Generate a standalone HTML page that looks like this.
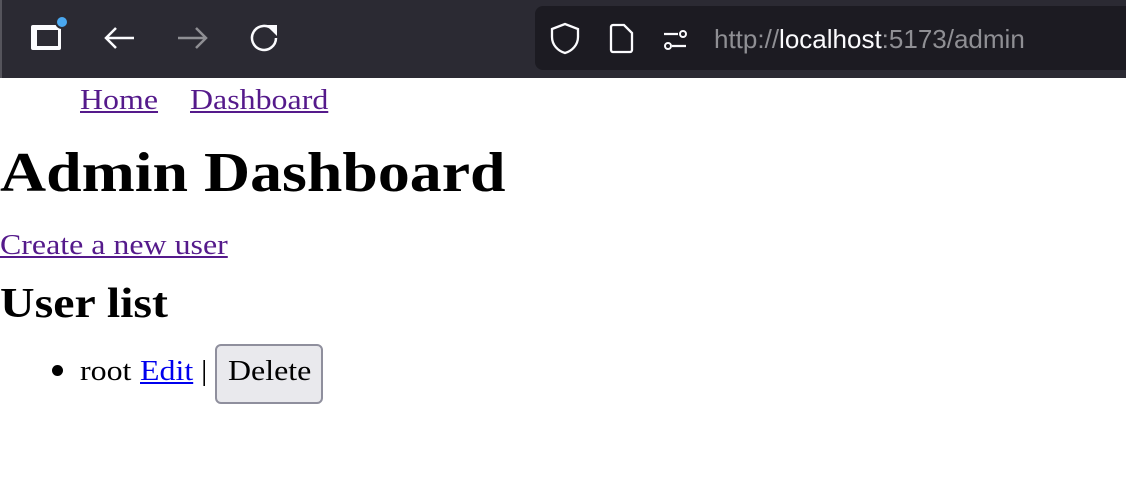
<!DOCTYPE html>
<html><head><style>
body{margin:0;width:1126px;height:490px;overflow:hidden;background:#fff;font-family:"Liberation Serif",serif;position:relative}
.bar{position:absolute;left:0;top:0;width:1126px;height:78px;background:#2b2a33;border-left:2px solid #55545c;box-sizing:border-box}
.url{position:absolute;left:535px;top:6px;width:600px;height:64px;background:#1c1b22;border-radius:8px}
.t{position:absolute;white-space:nowrap;line-height:1;transform:scaleX(1.14);transform-origin:0 0}
a.v{color:#551a8b}
a.b{color:#0000ee}
</style></head><body>
<div class="bar">
<svg width="530" height="78" style="position:absolute;left:-2px;top:0">
<rect x="31" y="25" width="30" height="25" rx="2" fill="#fbfbfe"/>
<rect x="37" y="30" width="21" height="16" fill="#2b2a33"/>
<circle cx="62" cy="22" r="6" fill="#4aa8f0" stroke="#2b2a33" stroke-width="2"/>
<path d="M106 38h28M116 28l-10 10 10 10" stroke="#fbfbfe" stroke-width="2.5" fill="none"/>
<path d="M178 38h28M196 28l10 10-10 10" stroke="#8f8f94" stroke-width="2.5" fill="none"/>
<path d="M273 30a12 12 0 1 0 3 8" stroke="#fbfbfe" stroke-width="2.5" fill="none"/>
<path d="M266 25h11v11z" fill="#fbfbfe"/>
</svg>
</div>
<div class="url">
<svg width="170" height="64" style="position:absolute;left:0;top:0">
<path d="M17 23l13-5 13 5v8c0 8-6 14-13 16c-7-2-13-8-13-16z" stroke="#fbfbfe" stroke-width="2.3" fill="none"/>
<path d="M78 19h11l8 8v17a2 2 0 0 1-2 2h-17a2 2 0 0 1-2-2v-23a2 2 0 0 1 2-2z" stroke="#fbfbfe" stroke-width="2.3" fill="none"/>
<path d="M129 28h14M137 40h14" stroke="#fbfbfe" stroke-width="2.3"/>
<circle cx="148" cy="28" r="3" stroke="#fbfbfe" stroke-width="2" fill="none"/>
<circle cx="133" cy="40" r="3" stroke="#fbfbfe" stroke-width="2" fill="none"/>
</svg>
<div class="t" style="left:179px;top:20px;font-family:'Liberation Sans',sans-serif;font-size:26px;color:#8f8f94;transform:none">http://<span style="color:#fbfbfe">localhost</span>:5173/admin</div>
</div>
<div class="t" style="left:80px;top:86.5px;font-size:28px"><a class="v" href="#">Home</a></div>
<div class="t" style="left:190px;top:86.5px;font-size:28px"><a class="v" href="#">Dashboard</a></div>
<div class="t" style="left:0;top:145px;font-size:56px;font-weight:bold">Admin Dashboard</div>
<div class="t" style="left:0;top:231.5px;font-size:28px"><a class="v" href="#">Create a new user</a></div>
<div class="t" style="left:0;top:283px;font-size:42px;font-weight:bold">User list</div>
<div style="position:absolute;left:52px;top:365px;width:11px;height:11px;border-radius:50%;background:#000"></div>
<div class="t" style="left:80px;top:357.5px;font-size:28px">root</div>
<div class="t" style="left:140px;top:357.5px;font-size:28px"><a class="b" href="#">Edit</a></div>
<div class="t" style="left:201px;top:357.5px;font-size:28px">|</div>
<div style="position:absolute;left:215px;top:344px;width:108px;height:60px;box-sizing:border-box;background:#e9e9ed;border:2px solid #8f8f9d;border-radius:6px"></div>
<div class="t" style="left:228px;top:357.5px;font-size:28px">Delete</div>
</body></html>
